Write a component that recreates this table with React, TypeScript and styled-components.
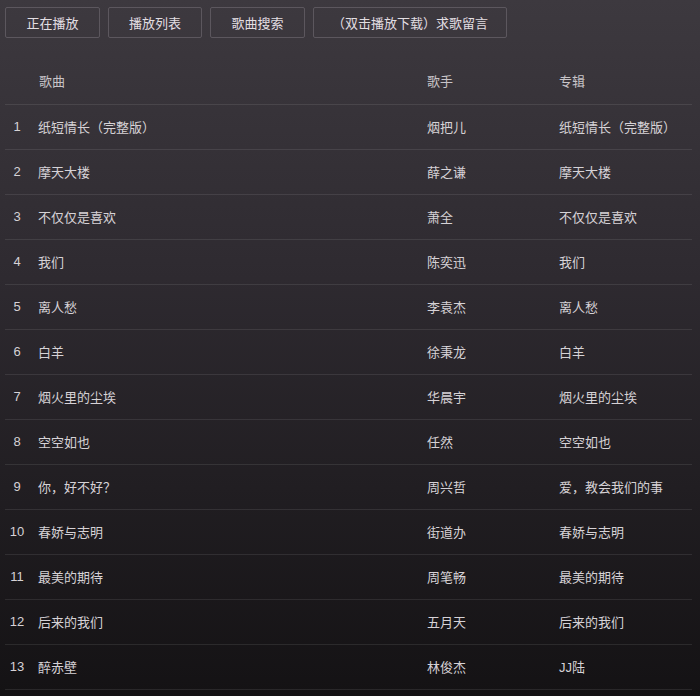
import React from "react";
import styled, { createGlobalStyle } from "styled-components";

const Global = createGlobalStyle`
  html, body {
    margin: 0;
    padding: 0;
    height: 100%;
  }
  body {
    background: linear-gradient(180deg, #3d393f 0%, #2e2a30 40%, #141214 100%);
    font-family: "Liberation Sans", "Noto Sans CJK SC", sans-serif;
    font-size: 13px;
    color: #d6d2d6;
  }
  #root { min-height: 100%; }
`;

const Page = styled.div`
  min-height: 696px;
  box-sizing: border-box;
  padding: 7px 8px 0 5px;
`;

const Toolbar = styled.div`
  display: flex;
  gap: 8px;
`;

const TabButton = styled.button<{ $w: number }>`
  width: ${(p) => p.$w}px;
  height: 31px;
  box-sizing: border-box;
  border: 1px solid #5c575e;
  border-radius: 2px;
  background: transparent;
  color: #e2dee2;
  font-family: "Liberation Sans", "Noto Sans CJK SC", sans-serif;
  font-size: 13px;
  padding: 0 0 1px;
  display: flex;
  align-items: center;
  justify-content: center;
  cursor: pointer;
`;

const Table = styled.div`
  margin-top: 22px;
  width: 687px;
`;

const Row = styled.div<{ $head?: boolean }>`
  display: grid;
  grid-template-columns: 33px 389px 132px 1fr;
  align-items: center;
  height: 45px;
  box-sizing: border-box;
  padding-bottom: ${(p) => (p.$head ? 4 : 2)}px;
  border-bottom: 1px solid rgba(255, 255, 255, 0.09);
  color: ${(p) => (p.$head ? "#c8c4c8" : "#d6d2d6")};
`;

const Num = styled.span`
  width: 24px;
  text-align: center;
`;

const Cell = styled.span<{ $shift?: number }>`
  white-space: nowrap;
  padding-left: ${(p) => p.$shift ?? 0}px;
`;

const songs: [string, string, string][] = [
  ["纸短情长（完整版）", "烟把儿", "纸短情长（完整版）"],
  ["摩天大楼", "薛之谦", "摩天大楼"],
  ["不仅仅是喜欢", "萧全", "不仅仅是喜欢"],
  ["我们", "陈奕迅", "我们"],
  ["离人愁", "李袁杰", "离人愁"],
  ["白羊", "徐秉龙", "白羊"],
  ["烟火里的尘埃", "华晨宇", "烟火里的尘埃"],
  ["空空如也", "任然", "空空如也"],
  ["你，好不好？", "周兴哲", "爱，教会我们的事"],
  ["春娇与志明", "街道办", "春娇与志明"],
  ["最美的期待", "周笔畅", "最美的期待"],
  ["后来的我们", "五月天", "后来的我们"],
  ["醉赤壁", "林俊杰", "JJ陆"],
];

const tabs: [string, number][] = [
  ["正在播放", 95],
  ["播放列表", 94],
  ["歌曲搜索", 95],
  ["（双击播放下载）求歌留言", 194],
];

export default function App() {
  return (
    <>
      <Global />
      <Page>
        <Toolbar>
          {tabs.map(([t, w]) => (
            <TabButton key={t} $w={w}>
              {t}
            </TabButton>
          ))}
        </Toolbar>
        <Table>
          <Row $head>
            <Num />
            <Cell $shift={1}>歌曲</Cell>
            <Cell>歌手</Cell>
            <Cell>专辑</Cell>
          </Row>
          {songs.map(([s, a, al], i) => (
            <Row key={i}>
              <Num>{i + 1}</Num>
              <Cell>{s}</Cell>
              <Cell>{a}</Cell>
              <Cell>{al}</Cell>
            </Row>
          ))}
        </Table>
      </Page>
    </>
  );
}
